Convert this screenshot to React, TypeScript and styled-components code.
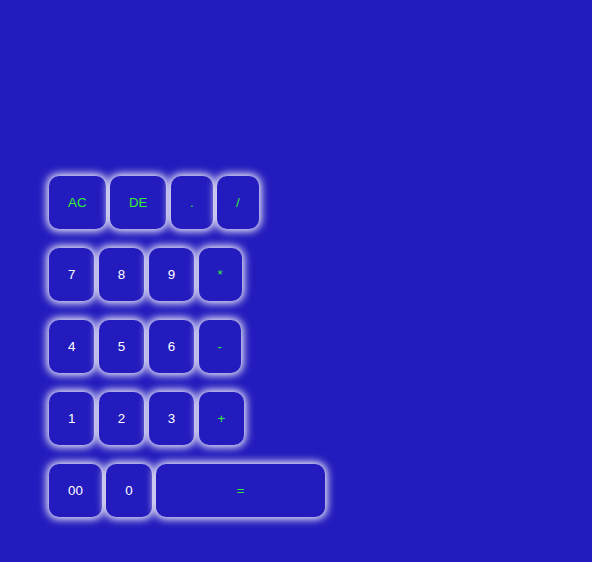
import React from "react";
import styled, { createGlobalStyle } from "styled-components";

const Global = createGlobalStyle`
  html, body { margin: 0; padding: 0; background: #231bbd; }
  body { font-family: "Liberation Sans", Arial, sans-serif; }
`;

const Page = styled.div`
  width: 592px;
  height: 562px;
  background: #231bbd;
  box-sizing: border-box;
  padding: 176px 0 0 49px;
`;

const Pad = styled.div`
  display: flex;
  flex-direction: column;
  gap: 19px;
`;

const Row = styled.div`
  display: flex;
  gap: 4.45px;
`;

const Key = styled.button<{ $op?: boolean; $w?: number }>`
  height: 53px;
  ${(p) => (p.$w ? `width: ${p.$w}px;` : "padding: 0 19px;")}
  border: none;
  border-radius: 10px;
  background: #231bbd;
  box-shadow: 0 0 9px 2px #ffffff;
  color: ${(p) => (p.$op ? "#33ee33" : "#ffffff")};
  font-family: "Liberation Sans", Arial, sans-serif;
  font-size: 13.333px;
  cursor: pointer;
  outline: none;
`;

type K = { t: string; op?: boolean; w?: number };

const rows: K[][] = [
  [{ t: "AC", op: true }, { t: "DE", op: true }, { t: ".", op: true }, { t: "/", op: true }],
  [{ t: "7" }, { t: "8" }, { t: "9" }, { t: "*", op: true }],
  [{ t: "4" }, { t: "5" }, { t: "6" }, { t: "-", op: true }],
  [{ t: "1" }, { t: "2" }, { t: "3" }, { t: "+", op: true }],
  [{ t: "00" }, { t: "0" }, { t: "=", op: true, w: 169 }],
];

export default function App() {
  return (
    <>
      <Global />
      <Page>
        <Pad>
          {rows.map((r, i) => (
            <Row key={i}>
              {r.map((k) => (
                <Key key={k.t} $op={k.op} $w={k.w}>
                  {k.t}
                </Key>
              ))}
            </Row>
          ))}
        </Pad>
      </Page>
    </>
  );
}
